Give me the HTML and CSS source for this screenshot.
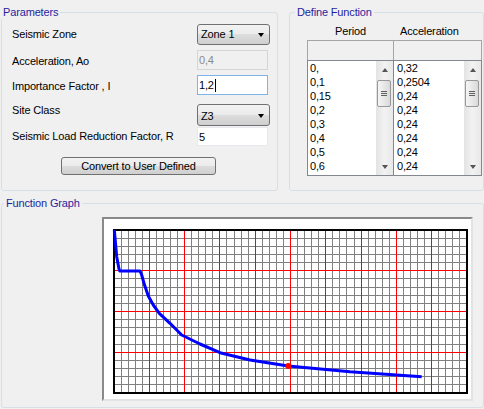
FILE: index.html
```html
<!DOCTYPE html>
<html>
<head>
<meta charset="utf-8">
<link rel="stylesheet" href="styles.css">
</head>
<body>
<div class="window">
  <div class="top">
    <fieldset class="group params">
      <legend>Parameters</legend>
      <div class="row r1"><span class="label">Seismic Zone</span><div class="combo">Zone 1<span class="arrow"></span></div></div>
      <div class="row r2"><span class="label">Acceleration, Ao</span><div class="textbox disabled">0,4</div></div>
      <div class="row r3"><span class="label">Importance Factor , I</span><div class="textbox focused">1,2<span class="caret"></span></div></div>
      <div class="row r4"><span class="label">Site Class</span><div class="combo combo-low">Z3<span class="arrow"></span></div></div>
      <div class="row r5"><span class="label">Seismic Load Reduction Factor, R</span><div class="textbox plain">5</div></div>
      <div class="btnrow"><div class="button">Convert to User Defined</div></div>
    </fieldset>
    <fieldset class="group define">
      <legend>Define Function</legend>
      <div class="cols">
        <div class="col left">
          <div class="head">Period</div>
          <div class="inbox"></div>
          <div class="list">
            <div class="items">
              <div>0,</div><div>0,1</div><div>0,15</div><div>0,2</div><div>0,3</div><div>0,4</div><div>0,5</div><div>0,6</div>
            </div>
            <div class="sbar">
              <div class="sbtn"><span class="up"></span></div>
              <div class="thumb"></div>
              <div class="strack"></div>
              <div class="sbtn"><span class="down"></span></div>
            </div>
          </div>
        </div>
        <div class="col right">
          <div class="head">Acceleration</div>
          <div class="inbox"></div>
          <div class="list">
            <div class="items">
              <div>0,32</div><div>0,2504</div><div>0,24</div><div>0,24</div><div>0,24</div><div>0,24</div><div>0,24</div><div>0,24</div>
            </div>
            <div class="sbar">
              <div class="sbtn"><span class="up"></span></div>
              <div class="thumb"></div>
              <div class="strack"></div>
              <div class="sbtn"><span class="down"></span></div>
            </div>
          </div>
        </div>
      </div>
    </fieldset>
  </div>
  <fieldset class="group graph">
    <legend>Function Graph</legend>
    <div class="panel">
      <svg class="plot" width="367" height="180" viewBox="0 0 367 180">
        <path fill="none" stroke="#808080" stroke-width="1" d="M17.5 11V174M24.5 11V174M31.5 11V174M38.5 11V174M52.5 11V174M59.5 11V174M66.5 11V174M73.5 11V174M87.5 11V174M94.5 11V174M101.5 11V174M108.5 11V174M122.5 11V174M130.5 11V174M137.5 11V174M144.5 11V174M158.5 11V174M165.5 11V174M172.5 11V174M179.5 11V174M193.5 11V174M200.5 11V174M207.5 11V174M214.5 11V174M228.5 11V174M235.5 11V174M242.5 11V174M250.5 11V174M264.5 11V174M271.5 11V174M278.5 11V174M285.5 11V174M299.5 11V174M306.5 11V174M313.5 11V174M320.5 11V174M334.5 11V174M341.5 11V174M348.5 11V174M355.5 11V174M10 19.5H363M10 27.5H363M10 35.5H363M10 43.5H363M10 59.5H363M10 68.5H363M10 76.5H363M10 84.5H363M10 100.5H363M10 108.5H363M10 116.5H363M10 125.5H363M10 141.5H363M10 149.5H363M10 157.5H363M10 165.5H363"/>
        <path fill="none" stroke="#ff0000" stroke-width="1" d="M45.5 11V174M80.5 11V174M115.5 11V174M151.5 11V174M186.5 11V174M221.5 11V174M257.5 11V174M292.5 11V174M327.5 11V174M10 51.5H363M10 92.5H363M10 133.5H363"/>
        <rect x="10" y="11" width="353" height="163" fill="none" stroke="#000" stroke-width="2"/>
        <polyline fill="none" stroke="#0000ff" stroke-width="3" stroke-linejoin="round" points="10.3,11 12.7,37.7 15,50 15.8,52 36,52 37.7,56 40.3,65.3 44.3,77 49.3,86 55.3,94.3 66,104.3 77.7,116 96,125 116,133.7 146,141 184.3,147 246,152.7 317.7,157.7"/>
        <circle cx="184.3" cy="147" r="3" fill="#ff0000"/>
      </svg>
    </div>
  </fieldset>
</div>
</body>
</html>
```

FILE: styles.css
```css
* { box-sizing: border-box; }
html, body { margin: 0; padding: 0; background: #f0f0f0; }
body {
  font-family: "Liberation Sans", Arial, sans-serif;
  font-size: 11px;
  letter-spacing: -0.15px;
  color: #000;
}
.window {
  width: 484px;
  height: 409px;
  overflow: hidden;
  background: #f0f0f0;
}
.top {
  display: flex;
  padding: 6px 0 0 1px;
}
.group {
  margin: 0;
  min-width: 0;
  border: 1px solid #d5dfe5;
  border-radius: 3px;
}
.group legend {
  padding: 0 2px;
  color: #1f1f9f;
  font-size: 11px;
  line-height: 13px;
}
/* Parameters */
.params {
  width: 277px;
  height: 185px;
  padding: 5px 0 0 10px;
}
.params legend { margin-left: -11px; }
.row {
  display: flex;
  align-items: flex-start;
}
.label {
  width: 185px;
  line-height: 13px;
  white-space: nowrap;
}
.r1 { height: 26px; }
.r1 .label { margin-top: 4px; }
.r2 { height: 25px; }
.r2 .label { margin-top: 5px; }
.r3 { height: 29px; }
.r3 .label { margin-top: 5px; }
.r4 { height: 23px; }
.r4 .label { margin-top: 0; }
.r5 { height: 30px; }
.r5 .label { margin-top: 3px; }

.combo {
  width: 73px;
  height: 21px;
  border: 1px solid #707070;
  border-radius: 3px;
  background: linear-gradient(#f2f2f2 0%, #ebebeb 50%, #dddddd 50%, #cfcfcf 100%);
  display: flex;
  align-items: center;
  justify-content: space-between;
  padding: 0 5px 0 3px;
  line-height: 13px;
}
.combo-low {
  height: 22px;
  padding-top: 2px;
}
.arrow {
  width: 0;
  height: 0;
  border-left: 3.5px solid transparent;
  border-right: 3.5px solid transparent;
  border-top: 4px solid #000;
}
.textbox {
  width: 71px;
  height: 20px;
  border: 1px solid #e2e3ea;
  background: #fff;
  padding: 0 1px;
  line-height: 18px;
  display: flex;
  align-items: center;
}
.textbox.disabled {
  background: #f0f0f0;
  border-color: #d5d5d5;
  color: #8a8a8a;
}
.textbox.focused {
  border-color: #7eb4ea;
}
.textbox.plain {
  height: 19px;
  border-color: #e8e8ee;
}
.caret {
  display: inline-block;
  width: 1px;
  height: 13px;
  background: #000;
  margin-left: 1px;
}
.btnrow {
  padding-left: 49px;
}
.button {
  width: 155px;
  height: 18px;
  border: 1px solid #707070;
  border-radius: 3px;
  background: linear-gradient(#f2f2f2 0%, #ebebeb 50%, #dddddd 50%, #cfcfcf 100%);
  text-align: center;
  line-height: 16px;
}

/* Define Function */
.define {
  width: 195px;
  height: 185px;
  margin-left: 11px;
  padding: 0 0 0 17px;
}
.define legend { margin-left: -12px; }
.cols {
  display: flex;
}
.col.left { width: 87px; }
.col.right { width: 89px; margin-left: -1px; }
.head {
  height: 21px;
  padding-top: 6px;
  line-height: 13px;
}
.left .head { text-align: center; }
.right .head { padding-left: 7px; }
.inbox {
  height: 20px;
  border: 1px solid #a5a5a5;
  border-bottom: none;
  background: #f0f0f0;
}
.list {
  height: 116px;
  border: 1px solid #828790;
  background: #fff;
  display: flex;
}
.items {
  flex: 1;
  padding: 0 0 0 2px;
  line-height: 14px;
  white-space: nowrap;
}
.right .items { padding-left: 3px; }
.sbar {
  width: 17px;
  display: flex;
  flex-direction: column;
  background: linear-gradient(to right, #e3e3e3, #f2f2f2 50%, #e8e8e8);
}
.sbtn {
  height: 17px;
  display: flex;
  align-items: center;
  justify-content: center;
}
.up, .down {
  width: 0;
  height: 0;
  border-left: 3.5px solid transparent;
  border-right: 3.5px solid transparent;
}
.up { border-bottom: 4px solid #555; }
.down { border-top: 4px solid #555; }
.thumb {
  height: 27px;
  margin: 2px 2px 0 1px;
  border: 1px solid #979797;
  border-radius: 2px;
  background: linear-gradient(to right, #f5f5f5, #e8e8e8 50%, #d9d9d9);
  display: flex;
  align-items: center;
  justify-content: center;
}
.thumb::before {
  content: "";
  width: 6px;
  height: 5px;
  background: repeating-linear-gradient(#606060 0 1px, transparent 1px 2px);
}
.strack { flex: 1; }

/* Function Graph */
.graph {
  width: 483px;
  height: 211px;
  margin: 6px 0 0 1px;
  padding: 7px 0 0 100px;
}
.graph legend { margin-left: -98px; }
.panel {
  width: 371px;
  height: 184px;
  border-top: 2px solid #8a8a8a;
  border-left: 2px solid #8a8a8a;
  border-right: 2px solid #e3e3e3;
  border-bottom: 2px solid #e3e3e3;
  background: #fff;
}
.plot { display: block; }
```
